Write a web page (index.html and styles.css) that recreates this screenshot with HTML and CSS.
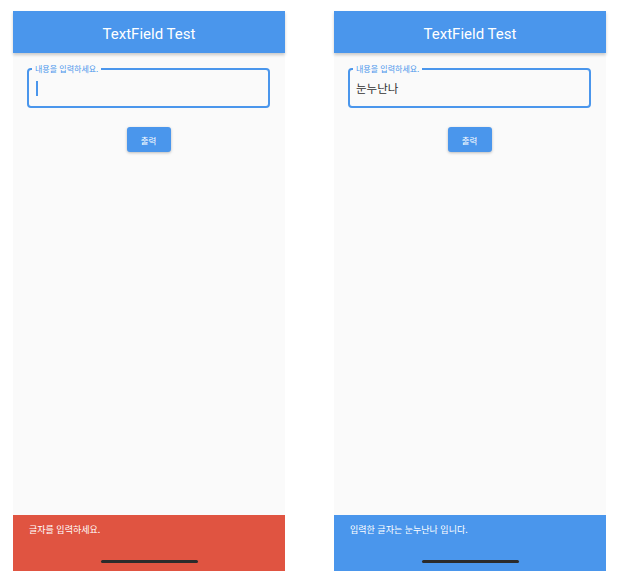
FILE: index.html
```html
<!DOCTYPE html>
<html lang="ko">
<head>
  <meta charset="UTF-8">
  <meta name="viewport" content="width=device-width, initial-scale=1.0">
  <title>TextField Test</title>
  <link rel="stylesheet" href="styles.css">
</head>
<body>
  <div class="screens">
    <!-- 입력 전 화면 -->
    <div class="phone">
      <div class="app-bar">TextField Test</div>
      <div class="content">
        <div class="field focused">
          <span class="field-label">내용을 입력하세요.</span>
          <span class="cursor"></span>
        </div>
        <button class="print-button">출력</button>
      </div>
      <div class="snackbar error">
        <span class="snack-text">글자를 입력하세요.</span>
        <span class="home-bar"></span>
      </div>
    </div>

    <!-- 입력 후 화면 -->
    <div class="phone">
      <div class="app-bar">TextField Test</div>
      <div class="content">
        <div class="field">
          <span class="field-label">내용을 입력하세요.</span>
          <span class="field-value">눈누난나</span>
        </div>
        <button class="print-button">출력</button>
      </div>
      <div class="snackbar info">
        <span class="snack-text">입력한 글자는 눈누난나 입니다.</span>
        <span class="home-bar"></span>
      </div>
    </div>
  </div>
</body>
</html>
```

FILE: styles.css
```css
body {
  margin: 0;
  background-color: #fff;
  font-family: Roboto, "Noto Sans CJK KR", sans-serif;
}
.screens {
  display: flex;
  gap: 49px;
  padding: 11px 0 0 13px;
}
.phone {
  width: 272px;
  height: 560px;
  display: flex;
  flex-direction: column;
  background-color: #fafafa;
}
.app-bar {
  height: 42px;
  flex-shrink: 0;
  box-sizing: border-box;
  padding-top: 4px;
  display: flex;
  align-items: center;
  justify-content: center;
  background-color: #4a96ec;
  color: #fff;
  font-size: 15px;
  box-shadow: 0 2px 3px rgba(0,0,0,0.2);
  position: relative;
  z-index: 1;
}
.content {
  flex: 1;
  display: flex;
  flex-direction: column;
  align-items: center;
  padding: 15px 15px 0 14px;
}
.field {
  position: relative;
  align-self: stretch;
  height: 40px;
  box-sizing: border-box;
  border: 2px solid #4a96ec;
  border-radius: 4px;
  display: flex;
  align-items: center;
  padding: 0 8px 0 6px;
}
.field-label {
  position: absolute;
  top: -7px;
  left: 3px;
  padding: 0 3px;
  background-color: #fafafa;
  color: #4a96ec;
  font-family: "Noto Sans CJK KR", sans-serif;
  font-size: 8px;
  line-height: 11px;
}
.cursor {
  width: 1.5px;
  height: 15px;
  margin-left: 1px;
  background-color: #4a96ec;
}
.field-value {
  color: #333;
  font-family: "Noto Sans CJK KR", sans-serif;
  font-size: 11.5px;
}
.print-button {
  margin-top: 19px;
  width: 44px;
  height: 25px;
  border: none;
  border-radius: 3px;
  background-color: #4a96ec;
  color: #fff;
  font-family: "Noto Sans CJK KR", sans-serif;
  font-size: 8.5px;
  box-shadow: 0 1px 3px rgba(0,0,0,0.25);
  padding: 0;
}
.snackbar {
  height: 56px;
  flex-shrink: 0;
  display: flex;
  flex-direction: column;
  align-items: center;
  box-sizing: border-box;
  padding: 8px 0 0 16px;
}
.snackbar.error {
  background-color: #e05441;
}
.snackbar.info {
  background-color: #4a96ec;
}
.snack-text {
  align-self: flex-start;
  color: #fff;
  font-family: "Noto Sans CJK KR", sans-serif;
  font-size: 9px;
  line-height: 13px;
}
.home-bar {
  margin: 24px 0 0 -16px;
  width: 97px;
  height: 3px;
  border-radius: 2px;
  background-color: #2b2b2b;
}
```
